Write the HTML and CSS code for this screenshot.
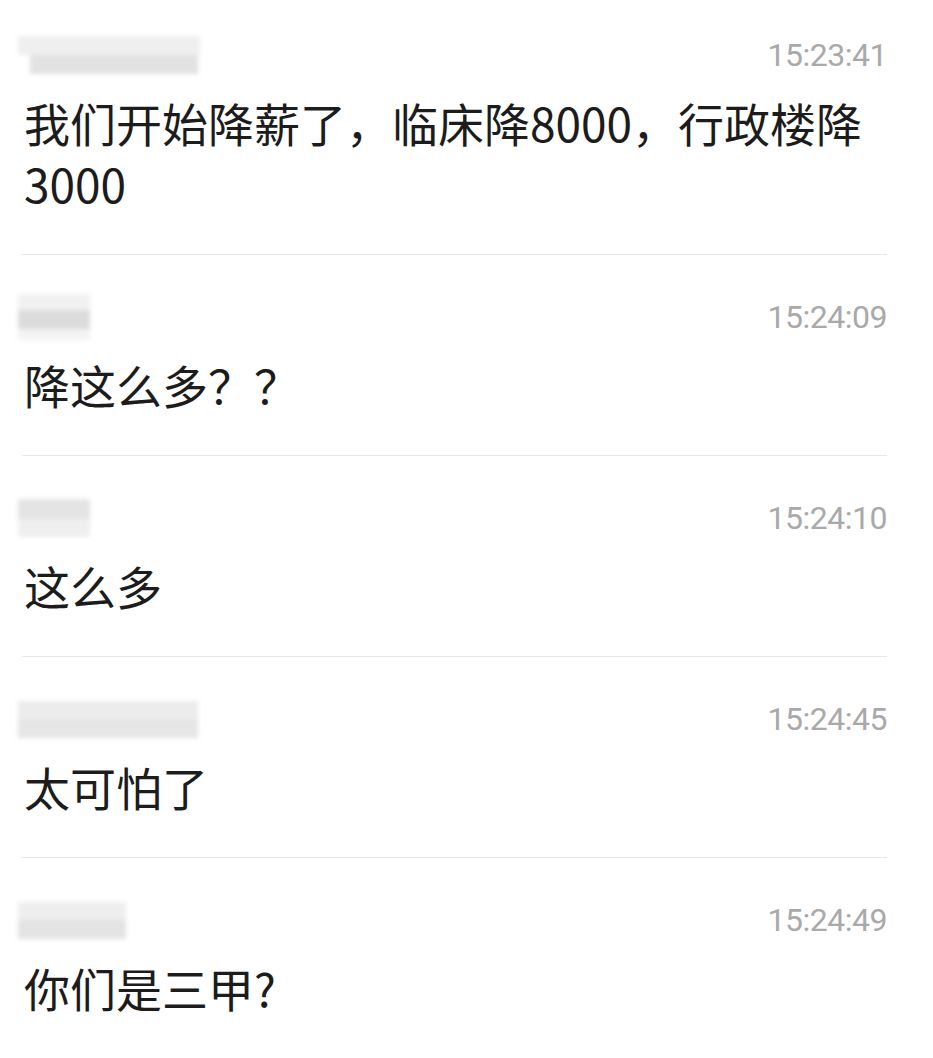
FILE: index.html
```html
<!DOCTYPE html>
<html lang="zh">
<head>
<meta charset="utf-8">
<link rel="stylesheet" href="styles.css">
</head>
<body>
<div class="list">
  <div class="entry first">
    <div class="head">
      <div class="name n1"><span class="bar a"></span><span class="bar b"></span></div>
      <div class="time">15:23:41</div>
    </div>
    <div class="msg">我们开始降薪了，临床降8000，行政楼降<br>3000</div>
  </div>
  <div class="entry">
    <div class="head">
      <div class="name n2"><span class="bar a"></span><span class="bar b"></span><span class="bar c"></span></div>
      <div class="time">15:24:09</div>
    </div>
    <div class="msg">降这么多？？</div>
  </div>
  <div class="entry">
    <div class="head">
      <div class="name n3"><span class="bar a"></span><span class="bar b"></span></div>
      <div class="time">15:24:10</div>
    </div>
    <div class="msg">这么多</div>
  </div>
  <div class="entry">
    <div class="head">
      <div class="name n4"><span class="bar a"></span><span class="bar b"></span></div>
      <div class="time">15:24:45</div>
    </div>
    <div class="msg">太可怕了</div>
  </div>
  <div class="entry">
    <div class="head">
      <div class="name n5"><span class="bar a"></span><span class="bar b"></span></div>
      <div class="time">15:24:49</div>
    </div>
    <div class="msg">你们是三甲?</div>
  </div>
</div>
</body>
</html>
```

FILE: styles.css
```css
html, body {
  margin: 0;
  padding: 0;
  background: #ffffff;
}

body {
  width: 933px;
  height: 1058px;
  overflow: hidden;
}

.list {
  margin: 0 46px 0 22px;
}

.entry {
  padding: 36px 0 40px;
  border-bottom: 1px solid #e8e8e8;
}

.entry.first {
  padding-top: 29px;
}

.head {
  height: 52px;
  display: flex;
  align-items: center;
  justify-content: space-between;
}

.name {
  display: flex;
  flex-direction: column;
  margin-left: -4px;
  filter: blur(2px);
}

.bar {
  display: block;
}

.n1 .a { width: 182px; height: 19px; background: #efefef; }
.n1 .b { width: 168px; height: 19px; margin-left: 12px; background: #e2e2e2; }

.n2 .a { width: 72px; height: 16px; background: #f1f1f1; }
.n2 .b { width: 72px; height: 19px; background: #dcdcdc; }
.n2 .c { width: 72px; height: 11px; background: #f3f3f3; }

.n3 .a { width: 72px; height: 20px; background: #e4e4e4; }
.n3 .b { width: 72px; height: 18px; background: #efefef; }

.n4 .a { width: 180px; height: 18px; background: #ececec; }
.n4 .b { width: 180px; height: 19px; background: #e6e6e6; }

.n5 .a { width: 108px; height: 18px; background: #eeeeee; }
.n5 .b { width: 108px; height: 19px; background: #e3e3e3; }

.time {
  font-family: Roboto, "Noto Sans", sans-serif;
  font-size: 32px;
  color: #a9a9a9;
  letter-spacing: -0.5px;
}

.msg {
  margin-top: 11px;
  padding-left: 2px;
  font-family: "Noto Sans CJK SC", "Noto Sans", sans-serif;
  font-size: 46px;
  line-height: 61px;
  color: #1c1c1c;
}
```
